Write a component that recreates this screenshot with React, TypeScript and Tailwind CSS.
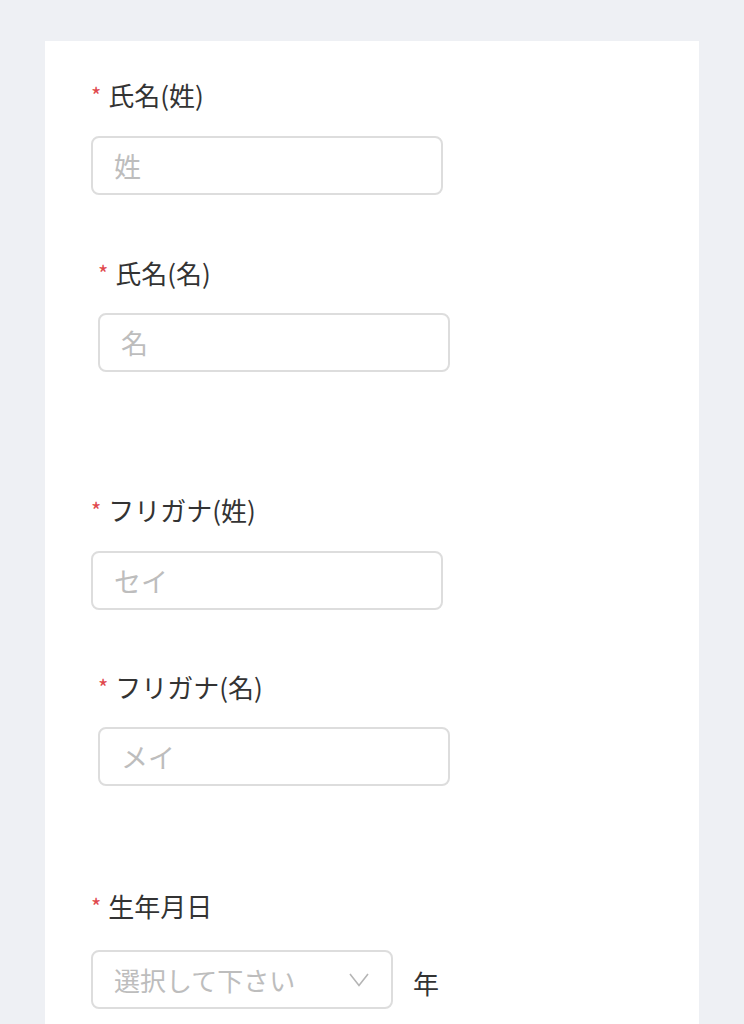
import React from 'react';

const font = { fontFamily: '"Noto Sans CJK JP", "Noto Sans", sans-serif' };

function Label({ text }: { text: string }) {
    return (
        <div className="flex h-[36px] items-center">
            <span className="mr-[7px] -mt-[2px] text-[22px] leading-none text-[#e0474c]">*</span>
            <span className="text-[26px] leading-[36px] text-[#333333]">{text}</span>
        </div>
    );
}

function TextField({ label, placeholder, indent, top, gap }: { label: string; placeholder: string; indent?: boolean; top: string; gap: string }) {
    return (
        <div className={`${top} ${indent ? 'ml-[7px]' : ''}`}>
            <Label text={label} />
            <input
                type="text"
                placeholder={placeholder}
                className={`${gap} block h-[59px] w-[352px] rounded-[8px] border-2 border-[#dddddd] bg-white px-[21px] text-[27px] text-[#333333] outline-none placeholder:text-[#bdbdbd]`}
                style={font}
            />
        </div>
    );
}

export default function App() {
    return (
        <div className="min-h-screen bg-[#eef0f4] px-[45px] pt-[41px]" style={font}>
            <div className="min-h-[983px] bg-white px-[46px] pt-[36px]">
                <TextField label="氏名(姓)" placeholder="姓" top="mt-0" gap="mt-[23px]" />
                <TextField label="氏名(名)" placeholder="名" indent top="mt-[60px]" gap="mt-[22px]" />
                <TextField label="フリガナ(姓)" placeholder="セイ" top="mt-[120px]" gap="mt-[23px]" />
                <TextField label="フリガナ(名)" placeholder="メイ" indent top="mt-[59px]" gap="mt-[22px]" />

                <div className="mt-[102px]">
                    <Label text="生年月日" />
                    <div className="mt-[26px] flex items-center">
                        <div className="flex h-[59px] w-[302px] items-center justify-between rounded-[8px] border-2 border-[#dddddd] bg-white pl-[21px] pr-[22px]">
                            <span className="text-[26px] text-[#bdbdbd]">選択して下さい</span>
                            <svg width="20" height="14" viewBox="0 0 20 14" fill="none">
                                <polyline points="1,1 10,12.5 19,1" stroke="#b5b5b5" strokeWidth="1.6" />
                            </svg>
                        </div>
                        <span className="ml-[20px] mt-[6px] text-[26px] text-[#333333]">年</span>
                    </div>
                </div>
            </div>
        </div>
    );
}
